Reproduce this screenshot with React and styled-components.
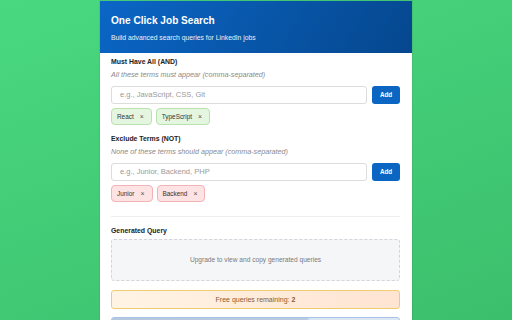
import React from 'react';
import styled, { createGlobalStyle } from 'styled-components';

const GlobalStyle = createGlobalStyle`
    html, body {
        margin: 0;
        padding: 0;
        height: 100%;
        overflow: hidden;
    }
    body {
        font-family: "Liberation Sans", Arial, sans-serif;
        background: linear-gradient(160deg, #49d880 0%, #3cbf6c 100%);
    }
`;

const Page = styled.div`
    display: flex;
    justify-content: center;
    align-items: flex-start;
    padding-top: 1px;
    height: 320px;
    box-sizing: border-box;
`;

const Panel = styled.div`
    width: 312px;
    height: 319px;
    overflow: hidden;
    background: #fff;
    box-shadow: 0 0 0 1px rgba(0, 0, 0, 0.06);
`;

const Header = styled.div`
    background: linear-gradient(120deg, #0b66c6 0%, #05478e 100%);
    color: #fff;
    height: 52px;
    padding: 14px 11px 0;
    box-sizing: border-box;
`;

const Title = styled.div`
    font-size: 10.1px;
    font-weight: bold;
    line-height: 12px;
`;

const Subtitle = styled.div`
    font-size: 6.8px;
    line-height: 9px;
    margin-top: 6px;
    opacity: 0.92;
`;

const Body = styled.div`
    padding: 4px 12px 0 11px;
`;

const Label = styled.div`
    font-size: 6.9px;
    font-weight: bold;
    line-height: 9px;
    color: #222;
    margin-top: ${p => p.top || 0}px;
`;

const Hint = styled.div`
    font-size: 7.2px;
    font-style: italic;
    line-height: 9px;
    color: #8a8a8a;
    margin-top: 3.5px;
`;

const InputRow = styled.div`
    display: flex;
    gap: 5px;
    margin-top: 7px;
    height: 18px;
`;

const Input = styled.div`
    flex: 1;
    border: 1px solid #dcdcdc;
    border-radius: 3px;
    display: flex;
    align-items: center;
    padding-left: 8px;
    font-size: 7.5px;
    color: #9a9a9a;
`;

const AddButton = styled.div`
    width: 28px;
    background: #0a66c2;
    border-radius: 3px;
    color: #fff;
    font-size: 6.3px;
    font-weight: bold;
    display: flex;
    align-items: center;
    justify-content: center;
`;

const TagList = styled.div`
    display: flex;
    gap: 4px;
    margin-top: 4px;
`;

const Tag = styled.div`
    height: 17px;
    box-sizing: border-box;
    padding: 0 7px 0 5px;
    display: flex;
    align-items: center;
    gap: 6px;
    border-radius: 4px;
    font-size: 6.4px;
    color: #333;
    background: ${p => (p.exclude ? '#fde3e3' : '#e5f6e0')};
    border: 1px solid ${p => (p.exclude ? '#f1b3b5' : '#b9e2af')};
`;

const Remove = styled.span`
    font-size: 7px;
    color: #555;
`;

const Divider = styled.div`
    height: 1px;
    background: #efefef;
    margin-top: 14px;
`;

const QueryBox = styled.div`
    margin-top: 4px;
    height: 42px;
    box-sizing: border-box;
    border: 1px dashed #d3d5da;
    border-radius: 3px;
    background: #f5f6f8;
    display: flex;
    align-items: center;
    justify-content: center;
    font-size: 6.6px;
    color: #7a7a7a;
`;

const Remaining = styled.div`
    margin-top: 9px;
    height: 19px;
    box-sizing: border-box;
    border: 1px solid #efcb72;
    border-radius: 3px;
    background: linear-gradient(90deg, #fff4e4 0%, #ffe4d2 100%);
    display: flex;
    align-items: center;
    justify-content: center;
    font-size: 7px;
    color: #8b5a2e;

    b {
        margin-left: 2px;
    }
`;

const UpgradeBar = styled.div`
    margin-top: 8px;
    height: 20px;
    border: 1px solid #a9c3e6;
    border-radius: 3px;
    background: linear-gradient(90deg, #b5c8e0 0%, #b9cbe2 68%, #dbe6f3 69%, #dde7f4 100%);
`;

function TagItem({ label, exclude }) {
    return (
        <Tag exclude={exclude}>
            {label}
            <Remove>×</Remove>
        </Tag>
    );
}

export default function App() {
    return (
        <>
            <GlobalStyle />
            <Page>
                <Panel>
                    <Header>
                        <Title>One Click Job Search</Title>
                        <Subtitle>Build advanced search queries for LinkedIn jobs</Subtitle>
                    </Header>
                    <Body>
                        <Label>Must Have All (AND)</Label>
                        <Hint>All these terms must appear (comma-separated)</Hint>
                        <InputRow>
                            <Input>e.g., JavaScript, CSS, Git</Input>
                            <AddButton>Add</AddButton>
                        </InputRow>
                        <TagList>
                            <TagItem label="React" />
                            <TagItem label="TypeScript" />
                        </TagList>

                        <Label top={9.5}>Exclude Terms (NOT)</Label>
                        <Hint>None of these terms should appear (comma-separated)</Hint>
                        <InputRow>
                            <Input>e.g., Junior, Backend, PHP</Input>
                            <AddButton>Add</AddButton>
                        </InputRow>
                        <TagList>
                            <TagItem label="Junior" exclude />
                            <TagItem label="Backend" exclude />
                        </TagList>

                        <Divider />

                        <Label top={9}>Generated Query</Label>
                        <QueryBox>Upgrade to view and copy generated queries</QueryBox>
                        <Remaining>
                            Free queries remaining: <b>2</b>
                        </Remaining>
                        <UpgradeBar />
                    </Body>
                </Panel>
            </Page>
        </>
    );
}
